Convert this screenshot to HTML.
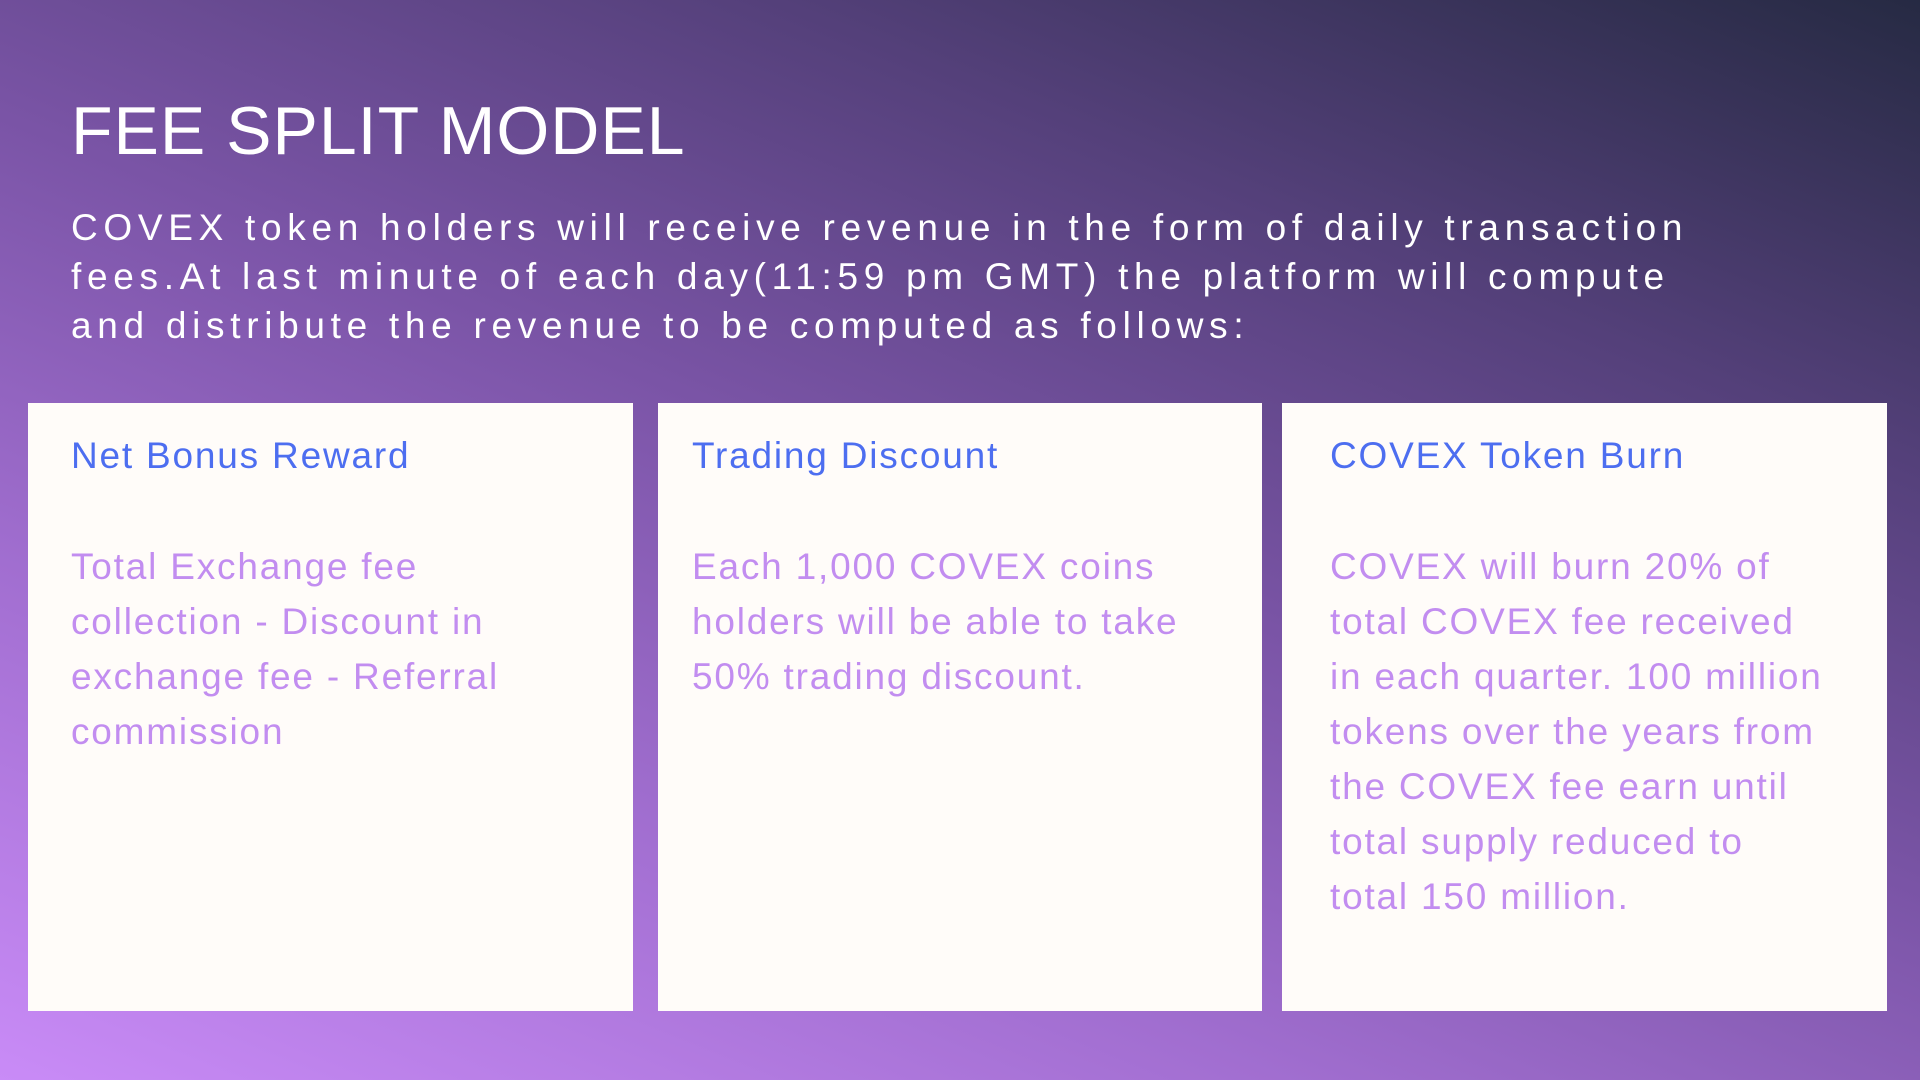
<!DOCTYPE html>
<html><head><meta charset="utf-8"><style>
html,body{margin:0;padding:0}
body{width:1920px;height:1080px;overflow:hidden;position:relative;font-family:"Liberation Sans",sans-serif;
background:linear-gradient(22deg,#c98bf7 0%,#a16ed0 28%,#7a54a6 52%,#54407a 75%,#262a43 100%);}
h1{position:absolute;left:71px;top:92px;margin:0;font-size:68px;font-weight:400;color:#fff;letter-spacing:1px;white-space:nowrap}
.intro{position:absolute;left:71px;top:203px;margin:0;font-size:37px;line-height:49px;color:#fff;letter-spacing:5.7px;white-space:nowrap}
.card{position:absolute;top:403px;height:608px;background:#fffcf9}
.card h2{position:absolute;top:32px;margin:0;font-size:37px;font-weight:400;color:#4d6ef0;white-space:nowrap;letter-spacing:1.8px}
.card p{position:absolute;top:136px;margin:0;font-size:37px;line-height:55px;color:#c28df0;white-space:nowrap;letter-spacing:1.8px}
</style></head><body>
<h1>FEE SPLIT MODEL</h1>
<p class="intro">COVEX token holders will receive revenue in the form of daily transaction<br>fees.At last minute of each day(11:59 pm GMT) the platform will compute<br>and distribute the revenue to be computed as follows:</p>
<div class="card" style="left:28px;width:605px"><h2 style="left:43px">Net Bonus Reward</h2><p style="left:43px">Total Exchange fee<br>collection - Discount in<br>exchange fee - Referral<br>commission</p></div>
<div class="card" style="left:658px;width:604px"><h2 style="left:34px">Trading Discount</h2><p style="left:34px">Each 1,000 COVEX coins<br>holders will be able to take<br>50% trading discount.</p></div>
<div class="card" style="left:1282px;width:605px"><h2 style="left:48px">COVEX Token Burn</h2><p style="left:48px">COVEX will burn 20% of<br>total COVEX fee received<br>in each quarter. 100 million<br>tokens over the years from<br>the COVEX fee earn until<br>total supply reduced to<br>total 150 million.</p></div>
</body></html>
